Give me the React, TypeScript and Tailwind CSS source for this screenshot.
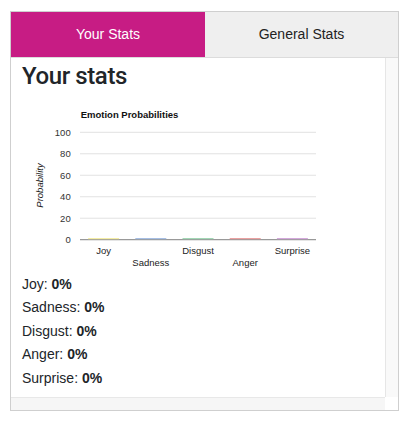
const emotions = [
  { name: "Joy", color: "#f3ec9c", row: 0 },
  { name: "Sadness", color: "#9db7e2", row: 1 },
  { name: "Disgust", color: "#98d3ad", row: 0 },
  { name: "Anger", color: "#e89797", row: 1 },
  { name: "Surprise", color: "#cf9fd8", row: 0 },
];

const ticks = [100, 80, 60, 40, 20, 0];

const EmotionChart = () => {
  const top = 32.3;
  const bottom = 139.7;
  const left = 69;
  const right = 305;
  const step = (right - left) / emotions.length;
  const yFor = (v: number) => bottom - ((bottom - top) * v) / 100;

  return (
    <svg width="374" height="170" className="block" style={{ fontFamily: '"Liberation Sans", Arial, sans-serif' }}>
      <text x="69.7" y="18.3" fontSize="9.5" fontWeight="700" fill="#111">
        Emotion Probabilities
      </text>
      {ticks.map((t) => (
        <g key={t}>
          <line
            x1={left}
            x2={right}
            y1={yFor(t)}
            y2={yFor(t)}
            stroke={t === 0 ? "#999" : "#e2e2e2"}
            strokeWidth={t === 0 ? 1.3 : 1}
          />
          <text x="59.7" y={yFor(t) + 3.4} fontSize="9.5" fill="#333" textAnchor="end">
            {t}
          </text>
        </g>
      ))}
      {emotions.map((e, i) => {
        const cx = left + step * (i + 0.5);
        return (
          <g key={e.name}>
            <rect x={cx - 15.5} y={bottom - 1.6} width="31" height="1.1" fill={e.color} />
            <text x={cx} y={e.row === 0 ? 153.5 : 166} fontSize="9.5" fill="#222" textAnchor="middle">
              {e.name}
            </text>
          </g>
        );
      })}
      <text
        x="31.5"
        y="85.5"
        fontSize="9.5"
        fontStyle="italic"
        fill="#222"
        textAnchor="middle"
        transform="rotate(-90 31.5 85.5)"
      >
        Probability
      </text>
    </svg>
  );
};

export default function App() {
  return (
    <div className="h-[421px] bg-white pt-[11px] pl-[10px] font-['Liberation_Sans',Arial,sans-serif] text-[#212529]">
      <div className="w-[389px] border border-[#cfcfcf]">
        <div className="flex h-[46px] border-b border-[#dcdcdc] text-[14px]">
          <div className="w-[194px] bg-[#c71c84] text-white flex items-center justify-center">Your Stats</div>
          <div className="flex-1 bg-[#efefef] text-[#222] flex items-center justify-center">General Stats</div>
        </div>
        <div className="flex">
          <div className="w-[374px] h-[339px] bg-white overflow-hidden">
            <h2 className="pl-[11px] pt-[4px] font-['Roboto',sans-serif] text-[24px] leading-[1.2] font-medium tracking-[-0.4px]">
              Your stats
            </h2>
            <div className="mt-[9px]">
              <EmotionChart />
            </div>
            <div className="pl-[11px] mt-[3px] text-[14px] leading-[23.5px]">
              {emotions.map((e) => (
                <p key={e.name}>
                  {e.name}: <b>0%</b>
                </p>
              ))}
            </div>
          </div>
          <div className="flex-1 bg-[#f9f9f9] border-l border-[#e6e6e6]" />
        </div>
        <div className="flex h-[13px]">
          <div className="w-[374px] bg-[#f6f6f6] border-t border-[#e8e8e8]" />
          <div className="flex-1 bg-white" />
        </div>
      </div>
    </div>
  );
}
